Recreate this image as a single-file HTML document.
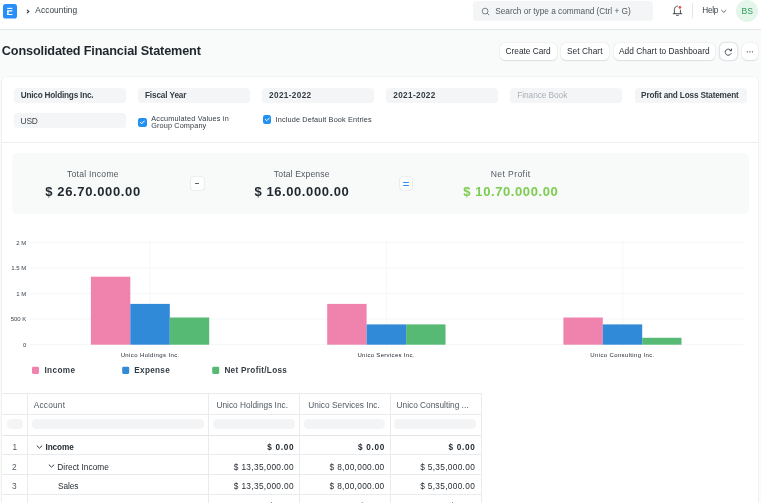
<!DOCTYPE html>
<html lang="en">
<head>
<meta charset="utf-8">
<title>Consolidated Financial Statement</title>
<style>
html,body{margin:0;padding:0}
body{width:761px;height:503px;overflow:hidden;position:relative;background:#f9fafa;font-family:"Liberation Sans",sans-serif;color:#1f272e}
.a{position:absolute;box-sizing:border-box}
.t{position:absolute;white-space:pre;margin:0;padding:0}
.txt{left:0;top:0;width:761px;height:503px;will-change:transform;opacity:.999}
.nav{left:0;top:0;width:761px;height:29.6px;background:#fff;border-bottom:0.8px solid #e6e9ec}
.search{left:473.2px;top:0.8px;width:180.2px;height:20.2px;background:#f4f5f6;border-radius:4px}
.avatar{left:736px;top:0.2px;width:22px;height:22px;border-radius:50%;background:#e4f5e9}
.btn{top:42.9px;height:17.2px;background:#fff;border-radius:4.8px;box-shadow:0 0.5px 1.2px rgba(25,39,52,.10),0 0 0 0.5px rgba(25,39,52,.05)}
.card{left:2px;top:77px;width:756px;height:440px;background:#fff;border-radius:5px;box-shadow:0 0 0 0.6px #e9ecee}
.inp{height:15.2px;width:112px;background:#f4f5f6;border-radius:3.6px}
.chk{width:8.6px;height:8.6px;background:#2490ef;border-radius:2.2px}
.sum{left:12px;top:153.3px;width:736.6px;height:61.2px;background:#f8f9f9;border-radius:5px}
.op{top:176.9px;height:13.5px;background:#fff;border-radius:2.4px;box-shadow:0 0 0 0.6px #e1e5e8}
.hl{height:0;border-top:0.8px solid #e9ecef}
.vl{width:0;border-left:0.8px solid #e9ecef}
.pill{top:419.3px;height:10px;background:#f3f4f5;border-radius:4.5px}
</style>
</head>
<body>
<!-- ===== navbar ===== -->
<div class="a nav"></div>
<svg class="a" style="left:3px;top:4px" width="14" height="14.8" viewBox="0 0 14 14.8">
  <rect x="0" y="0" width="14" height="14.6" rx="2.6" fill="#288ef8"/>
  <rect x="4.1" y="3.8" width="5.3" height="1.1" fill="#fff"/>
  <path d="M4.1 6.2H9.4V7.4H5.7V9.9H9.4V11.1H4.1Z" fill="#fff"/>
</svg>
<svg class="a" style="left:25px;top:7.5px" width="6" height="7" viewBox="0 0 6 7"><path d="M2.2 2.1L3.9 3.5L2.2 4.9" fill="none" stroke="#333c44" stroke-width="1.1" stroke-linecap="round" stroke-linejoin="round"/></svg>
<div class="a search"></div>
<svg class="a" style="left:480px;top:5.5px" width="11" height="11" viewBox="0 0 11 11"><circle cx="5.1" cy="5.1" r="2.9" fill="none" stroke="#6c7680" stroke-width="0.9"/><path d="M7.3 7.3L8.9 8.9" stroke="#6c7680" stroke-width="0.9" stroke-linecap="round"/></svg>
<svg class="a" style="left:671px;top:3px" width="14" height="15" viewBox="0 0 14 15">
  <path d="M3.4 10.6V6.4C3.4 4.6 4.9 3.2 6.4 3.1M9.4 10.6V7.2" fill="none" stroke="#333c44" stroke-width="0.9" stroke-linecap="round"/>
  <path d="M2.2 10.7H10.8" stroke="#333c44" stroke-width="0.9" stroke-linecap="round"/>
  <path d="M5.3 12.2C5.8 12.7 7 12.7 7.6 12.2" fill="none" stroke="#333c44" stroke-width="0.9" stroke-linecap="round"/>
  <circle cx="8.9" cy="4.4" r="1.35" fill="#e24c4c"/>
</svg>
<div class="a" style="left:692.2px;top:3.4px;width:0.9px;height:15px;background:#e2e6e9"></div>
<svg class="a" style="left:720px;top:8px" width="8" height="7" viewBox="0 0 8 7"><path d="M1.7 2.4L3.8 4.4L5.9 2.4" fill="none" stroke="#333c44" stroke-width="0.8" stroke-linecap="round" stroke-linejoin="round"/></svg>
<div class="a avatar"></div>

<!-- ===== page head buttons ===== -->
<div class="a btn" style="left:499.5px;width:57.2px"></div>
<div class="a btn" style="left:560.8px;width:47.9px"></div>
<div class="a btn" style="left:613.6px;width:101.5px"></div>
<div class="a btn" style="left:719.8px;width:17.3px;box-shadow:0 0 0 1.3px #e2e5e9"></div>
<div class="a btn" style="left:741.8px;width:16.4px"></div>
<svg class="a" style="left:723px;top:46.7px" width="11" height="11" viewBox="0 0 11 11">
  <path d="M7.8 3.3A3.1 3.1 0 1 0 8.1 6.6" fill="none" stroke="#333c44" stroke-width="0.9" stroke-linecap="round"/>
  <path d="M8.5 2V3.7H6.9" fill="none" stroke="#333c44" stroke-width="0.9" stroke-linecap="round" stroke-linejoin="round"/>
</svg>
<svg class="a" style="left:745px;top:50px" width="10" height="4" viewBox="0 0 10 4"><circle cx="2.3" cy="1.8" r="0.65" fill="#333c44"/><circle cx="4.9" cy="1.8" r="0.65" fill="#333c44"/><circle cx="7.4" cy="1.8" r="0.65" fill="#333c44"/></svg>

<!-- ===== card ===== -->
<div class="a card"></div>
<div class="a inp" style="left:14px;top:87.9px"></div>
<div class="a inp" style="left:138.2px;top:87.9px"></div>
<div class="a inp" style="left:262.4px;top:87.9px"></div>
<div class="a inp" style="left:386.4px;top:87.9px"></div>
<div class="a inp" style="left:510.4px;top:87.9px"></div>
<div class="a inp" style="left:634.6px;top:87.9px"></div>
<div class="a inp" style="left:14px;top:113.3px"></div>
<div class="a chk" style="left:138.1px;top:118.1px"></div>
<div class="a chk" style="left:262.5px;top:115.3px"></div>
<svg class="a" style="left:138.1px;top:118.1px" width="8.6" height="8.6" viewBox="0 0 8.6 8.6"><path d="M2.4 4.4L3.8 5.7L6.3 3" fill="none" stroke="#fff" stroke-width="1" stroke-linecap="round" stroke-linejoin="round"/></svg>
<svg class="a" style="left:262.5px;top:115.3px" width="8.6" height="8.6" viewBox="0 0 8.6 8.6"><path d="M2.4 4.4L3.8 5.7L6.3 3" fill="none" stroke="#fff" stroke-width="1" stroke-linecap="round" stroke-linejoin="round"/></svg>
<div class="a hl" style="left:2px;top:142px;width:756px;border-color:#eceff1"></div>

<!-- summary -->
<div class="a sum"></div>
<div class="a op" style="left:190.5px;width:13.6px"></div>
<div class="a" style="left:195px;top:183.1px;width:4.4px;height:1px;background:#505a62;border-radius:.5px"></div>
<div class="a op" style="left:399.9px;width:12.5px"></div>
<div class="a" style="left:402.9px;top:181.9px;width:6.2px;height:1.2px;background:#2490ef;border-radius:.5px"></div>
<div class="a" style="left:402.9px;top:184.8px;width:6.2px;height:1.2px;background:#2490ef;border-radius:.5px"></div>

<!-- ===== chart ===== -->
<svg class="a" style="left:0;top:230px" width="761" height="160" viewBox="0 230 761 160">
  <g stroke="#f1f3f5" stroke-width="0.7">
    <line x1="30" x2="743.5" y1="242.5" y2="242.5"/>
    <line x1="30" x2="743.5" y1="268" y2="268"/>
    <line x1="30" x2="743.5" y1="293.5" y2="293.5"/>
    <line x1="30" x2="743.5" y1="319" y2="319"/>
    <line x1="30" x2="743.5" y1="344.6" y2="344.6"/>
    <line x1="150" x2="150" y1="239" y2="348"/>
    <line x1="386.5" x2="386.5" y1="239" y2="348"/>
    <line x1="622.7" x2="622.7" y1="239" y2="348"/>
  </g>
  <g>
    <rect x="90.9" y="276.7" width="39.4" height="68" fill="#f083ae"/>
    <rect x="130.3" y="303.9" width="39.5" height="40.8" fill="#318ad8"/>
    <rect x="169.8" y="317.5" width="39.4" height="27.2" fill="#56b974"/>
    <rect x="327.2" y="303.9" width="39.4" height="40.8" fill="#f083ae"/>
    <rect x="366.6" y="324.4" width="39.5" height="20.3" fill="#318ad8"/>
    <rect x="406.1" y="324.4" width="39.4" height="20.3" fill="#56b974"/>
    <rect x="563.4" y="317.5" width="39.4" height="27.2" fill="#f083ae"/>
    <rect x="602.8" y="324.4" width="39.4" height="20.3" fill="#318ad8"/>
    <rect x="642.2" y="337.8" width="39.3" height="6.9" fill="#56b974"/>
  </g>
  <rect x="32" y="366.7" width="7" height="7.2" rx="1.4" fill="#f083ae"/>
  <rect x="122.2" y="366.7" width="7" height="7.2" rx="1.4" fill="#318ad8"/>
  <rect x="212.2" y="366.7" width="7" height="7.2" rx="1.4" fill="#56b974"/>
</svg>

<!-- ===== table ===== -->
<div class="a hl" style="left:2px;top:392.9px;width:479.6px"></div>
<div class="a hl" style="left:2px;top:414.2px;width:479.6px"></div>
<div class="a hl" style="left:2px;top:434.6px;width:479.6px;border-color:#e2e6e9"></div>
<div class="a hl" style="left:2px;top:454.4px;width:479.6px"></div>
<div class="a hl" style="left:2px;top:474.2px;width:479.6px"></div>
<div class="a hl" style="left:2px;top:494.2px;width:479.6px"></div>
<div class="a vl" style="left:27.4px;top:393px;height:112px"></div>
<div class="a vl" style="left:208.2px;top:393px;height:112px"></div>
<div class="a vl" style="left:298.8px;top:393px;height:112px"></div>
<div class="a vl" style="left:390.2px;top:393px;height:112px"></div>
<div class="a vl" style="left:481.2px;top:393px;height:112px"></div>
<div class="a pill" style="left:7.2px;width:15.8px"></div>
<div class="a pill" style="left:32px;width:171.8px"></div>
<div class="a pill" style="left:213px;width:81.6px"></div>
<div class="a pill" style="left:303.7px;width:81.6px"></div>
<div class="a pill" style="left:394.3px;width:81.6px"></div>
<svg class="a" style="left:36px;top:443.5px" width="7" height="6" viewBox="0 0 7 6"><path d="M1.1 1.9L3.5 4.2L5.9 1.9" fill="none" stroke="#333c44" stroke-width="1" stroke-linecap="round" stroke-linejoin="round"/></svg>
<svg class="a" style="left:47.7px;top:463.3px" width="7" height="6" viewBox="0 0 7 6"><path d="M1.1 1.9L3.5 4.2L5.9 1.9" fill="none" stroke="#333c44" stroke-width="1" stroke-linecap="round" stroke-linejoin="round"/></svg>

<!-- ===== text ===== -->
<div class="a txt">
<div class="t" style="top:5px;font-size:8.3px;line-height:10px;color:#333c44;letter-spacing:0.093px;left:35.30px;">Accounting</div>
<div class="t" style="top:6px;font-size:8.3px;line-height:10px;color:#505a62;letter-spacing:-0.020px;left:495.20px;">Search or type a command (Ctrl + G)</div>
<div class="t" style="top:6px;font-size:8.2px;line-height:9px;color:#333c44;letter-spacing:-0.253px;left:702.31px;">Help</div>
<div class="t" style="top:6px;font-size:8.6px;line-height:10px;color:#2f9d58;left:697.20px;width:100px;text-align:center;">BS</div>
<div class="t" style="top:44px;font-size:12.7px;line-height:14px;color:#1f272e;font-weight:700;letter-spacing:-0.149px;left:1.84px;">Consolidated Financial Statement</div>
<div class="t" style="top:46px;font-size:8.3px;line-height:10px;color:#1f272e;letter-spacing:-0.021px;left:505.60px;">Create Card</div>
<div class="t" style="top:46px;font-size:8.3px;line-height:10px;color:#1f272e;letter-spacing:0.054px;left:567.00px;">Set Chart</div>
<div class="t" style="top:46px;font-size:8.3px;line-height:10px;color:#1f272e;letter-spacing:0.058px;left:618.90px;">Add Chart to Dashboard</div>
<div class="t" style="top:91px;font-size:8.2px;line-height:9px;color:#333c44;font-weight:700;letter-spacing:-0.197px;left:20.71px;">Unico Holdings Inc.</div>
<div class="t" style="top:91px;font-size:8.2px;line-height:9px;color:#333c44;font-weight:700;letter-spacing:-0.106px;left:144.91px;">Fiscal Year</div>
<div class="t" style="top:91px;font-size:8.2px;line-height:9px;color:#333c44;font-weight:700;letter-spacing:0.353px;left:269.11px;">2021-2022</div>
<div class="t" style="top:91px;font-size:8.2px;line-height:9px;color:#333c44;font-weight:700;letter-spacing:0.353px;left:393.31px;">2021-2022</div>
<div class="t" style="top:90px;font-size:8.3px;line-height:10px;color:#a9b1b8;letter-spacing:-0.067px;left:517.30px;">Finance Book</div>
<div class="t" style="top:91px;font-size:8.2px;line-height:9px;color:#333c44;font-weight:700;letter-spacing:-0.161px;left:641.11px;">Profit and Loss Statement</div>
<div class="t" style="top:116px;font-size:8.4px;line-height:10px;color:#3d4750;letter-spacing:-0.240px;left:20.60px;">USD</div>
<div class="t" style="top:114px;font-size:7.3px;line-height:9px;color:#333c44;letter-spacing:0.189px;left:151.26px;">Accumulated Values in</div>
<div class="t" style="top:121px;font-size:7.3px;line-height:9px;color:#333c44;letter-spacing:0.119px;left:151.26px;">Group Company</div>
<div class="t" style="top:115px;font-size:7.3px;line-height:9px;color:#333c44;letter-spacing:0.148px;left:275.56px;">Include Default Book Entries</div>
<div class="t" style="top:169px;font-size:8.6px;line-height:10px;color:#505a62;letter-spacing:0.273px;left:66.88px;">Total Income</div>
<div class="t" style="top:184px;font-size:13.0px;line-height:15px;color:#1f272e;font-weight:700;letter-spacing:0.632px;left:45.22px;">$ 26.70.000.00</div>
<div class="t" style="top:169px;font-size:8.6px;line-height:10px;color:#505a62;letter-spacing:0.146px;left:273.78px;">Total Expense</div>
<div class="t" style="top:184px;font-size:13.0px;line-height:15px;color:#1f272e;font-weight:700;letter-spacing:0.585px;left:254.42px;">$ 16.00.000.00</div>
<div class="t" style="top:169px;font-size:8.6px;line-height:10px;color:#505a62;letter-spacing:0.400px;left:490.68px;">Net Profit</div>
<div class="t" style="top:184px;font-size:13.0px;line-height:15px;color:#7ccc50;font-weight:700;letter-spacing:0.593px;left:463.32px;">$ 10.70.000.00</div>
<div class="t" style="top:240px;font-size:6.0px;line-height:6px;color:#353f48;right:734.64px;">2 M</div>
<div class="t" style="top:265px;font-size:6.0px;line-height:6px;color:#353f48;right:734.64px;">1.5 M</div>
<div class="t" style="top:291px;font-size:6.0px;line-height:6px;color:#353f48;right:734.64px;">1 M</div>
<div class="t" style="top:316px;font-size:6.0px;line-height:6px;color:#353f48;right:734.64px;">500 K</div>
<div class="t" style="top:342px;font-size:6.0px;line-height:6px;color:#353f48;right:734.64px;">0</div>
<div class="t" style="top:352px;font-size:6.0px;line-height:6px;color:#222b33;letter-spacing:0.384px;left:120.64px;">Unico Holdings Inc.</div>
<div class="t" style="top:352px;font-size:6.0px;line-height:6px;color:#222b33;letter-spacing:0.314px;left:357.44px;">Unico Services Inc.</div>
<div class="t" style="top:352px;font-size:6.0px;line-height:6px;color:#222b33;letter-spacing:0.361px;left:590.34px;">Unico Consulting Inc.</div>
<div class="t" style="top:366px;font-size:8.2px;line-height:9px;color:#333c44;font-weight:700;letter-spacing:0.382px;left:44.41px;">Income</div>
<div class="t" style="top:366px;font-size:8.2px;line-height:9px;color:#333c44;font-weight:700;letter-spacing:0.299px;left:134.31px;">Expense</div>
<div class="t" style="top:366px;font-size:8.2px;line-height:9px;color:#333c44;font-weight:700;letter-spacing:0.304px;left:224.41px;">Net Profit/Loss</div>
<div class="t" style="top:400px;font-size:8.3px;line-height:10px;color:#505a62;letter-spacing:0.219px;left:33.70px;">Account</div>
<div class="t" style="top:400px;font-size:8.3px;line-height:10px;color:#505a62;left:216.50px;">Unico Holdings Inc.</div>
<div class="t" style="top:400px;font-size:8.3px;line-height:10px;color:#505a62;letter-spacing:0.027px;left:308.30px;">Unico Services Inc.</div>
<div class="t" style="top:400px;font-size:8.3px;line-height:10px;color:#505a62;left:396.60px;">Unico Consulting ...</div>
<div class="t" style="top:442px;font-size:8.3px;line-height:10px;color:#505a62;left:12.60px;">1</div>
<div class="t" style="top:462px;font-size:8.3px;line-height:10px;color:#505a62;left:12.10px;">2</div>
<div class="t" style="top:481px;font-size:8.3px;line-height:10px;color:#505a62;left:12.10px;">3</div>
<div class="t" style="top:443px;font-size:8.2px;line-height:9px;color:#1f272e;font-weight:700;letter-spacing:-0.078px;left:45.51px;">Income</div>
<div class="t" style="top:462px;font-size:8.3px;line-height:10px;color:#1f272e;letter-spacing:0.034px;left:57.30px;">Direct Income</div>
<div class="t" style="top:481px;font-size:8.3px;line-height:10px;color:#1f272e;letter-spacing:-0.092px;left:58.00px;">Sales</div>
<div class="t" style="top:443px;font-size:8.2px;line-height:9px;color:#1f272e;font-weight:700;letter-spacing:0.684px;right:466.82px;">$ 0.00</div>
<div class="t" style="top:462px;font-size:8.3px;line-height:10px;color:#1f272e;letter-spacing:0.332px;right:467.17px;">$ 13,35,000.00</div>
<div class="t" style="top:481px;font-size:8.3px;line-height:10px;color:#1f272e;letter-spacing:0.332px;right:467.17px;">$ 13,35,000.00</div>
<div class="t" style="top:501px;font-size:8.3px;line-height:10px;color:#1f272e;letter-spacing:0.284px;right:467.22px;">$ 0.00</div>
<div class="t" style="top:443px;font-size:8.2px;line-height:9px;color:#1f272e;font-weight:700;letter-spacing:0.684px;right:376.12px;">$ 0.00</div>
<div class="t" style="top:462px;font-size:8.3px;line-height:10px;color:#1f272e;letter-spacing:0.321px;right:376.48px;">$ 8,00,000.00</div>
<div class="t" style="top:481px;font-size:8.3px;line-height:10px;color:#1f272e;letter-spacing:0.321px;right:376.48px;">$ 8,00,000.00</div>
<div class="t" style="top:501px;font-size:8.3px;line-height:10px;color:#1f272e;letter-spacing:0.284px;right:376.52px;">$ 0.00</div>
<div class="t" style="top:443px;font-size:8.2px;line-height:9px;color:#1f272e;font-weight:700;letter-spacing:0.684px;right:285.52px;">$ 0.00</div>
<div class="t" style="top:462px;font-size:8.3px;line-height:10px;color:#1f272e;letter-spacing:0.321px;right:285.88px;">$ 5,35,000.00</div>
<div class="t" style="top:481px;font-size:8.3px;line-height:10px;color:#1f272e;letter-spacing:0.321px;right:285.88px;">$ 5,35,000.00</div>
<div class="t" style="top:501px;font-size:8.3px;line-height:10px;color:#1f272e;letter-spacing:0.284px;right:285.92px;">$ 0.00</div>
</div>
</body>
</html>
